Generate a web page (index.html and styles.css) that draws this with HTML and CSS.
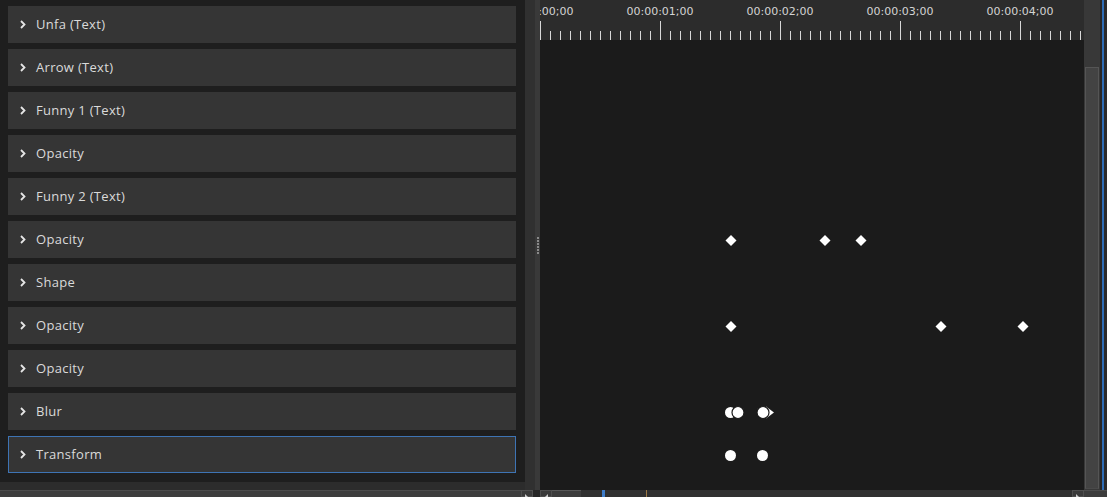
FILE: index.html
```html
<!DOCTYPE html>
<html>
<head>
<meta charset="utf-8">
<link rel="stylesheet" href="styles.css">
</head>
<body>
<div class="app">
  <div class="main">
    <div class="left">
      <div class="list">
        <div class="item"><svg class="chev" viewBox="0 0 6 9"><path d="M1 1l3.5 3.5L1 8"/></svg><span>Unfa (Text)</span></div>
        <div class="item"><svg class="chev" viewBox="0 0 6 9"><path d="M1 1l3.5 3.5L1 8"/></svg><span>Arrow (Text)</span></div>
        <div class="item"><svg class="chev" viewBox="0 0 6 9"><path d="M1 1l3.5 3.5L1 8"/></svg><span>Funny 1 (Text)</span></div>
        <div class="item"><svg class="chev" viewBox="0 0 6 9"><path d="M1 1l3.5 3.5L1 8"/></svg><span>Opacity</span></div>
        <div class="item"><svg class="chev" viewBox="0 0 6 9"><path d="M1 1l3.5 3.5L1 8"/></svg><span>Funny 2 (Text)</span></div>
        <div class="item"><svg class="chev" viewBox="0 0 6 9"><path d="M1 1l3.5 3.5L1 8"/></svg><span>Opacity</span></div>
        <div class="item"><svg class="chev" viewBox="0 0 6 9"><path d="M1 1l3.5 3.5L1 8"/></svg><span>Shape</span></div>
        <div class="item"><svg class="chev" viewBox="0 0 6 9"><path d="M1 1l3.5 3.5L1 8"/></svg><span>Opacity</span></div>
        <div class="item"><svg class="chev" viewBox="0 0 6 9"><path d="M1 1l3.5 3.5L1 8"/></svg><span>Opacity</span></div>
        <div class="item"><svg class="chev" viewBox="0 0 6 9"><path d="M1 1l3.5 3.5L1 8"/></svg><span>Blur</span></div>
        <div class="item selected"><svg class="chev" viewBox="0 0 6 9"><path d="M1 1l3.5 3.5L1 8"/></svg><span>Transform</span></div>
      </div>
      <div class="left-foot"></div>
    </div>
    <div class="splitter">
      <div class="spl-a"></div>
      <div class="spl-b"><div class="grip"></div></div>
    </div>
    <div class="timeline">
      <div class="ruler">
        <div class="labels">
          <span class="lbl">00:00:00;00</span>
          <span class="lbl">00:00:01;00</span>
          <span class="lbl">00:00:02;00</span>
          <span class="lbl">00:00:03;00</span>
          <span class="lbl">00:00:04;00</span>
        </div>
        <div class="ticks"></div>
      </div>
      <div class="tbody">
        <div class="tracks">
          <div class="track"></div>
          <div class="track"></div>
          <div class="track"></div>
          <div class="track"></div>
          <div class="track"></div>
          <div class="track">
            <svg class="keys" viewBox="0 0 544 37">
              <polygon points="191,13 196.5,18.5 191,24 185.5,18.5"/>
              <polygon points="285,13 290.5,18.5 285,24 279.5,18.5"/>
              <polygon points="321,13 326.5,18.5 321,24 315.5,18.5"/>
            </svg>
          </div>
          <div class="track"></div>
          <div class="track">
            <svg class="keys" viewBox="0 0 544 37">
              <polygon points="191,13 196.5,18.5 191,24 185.5,18.5"/>
              <polygon points="401,13 406.5,18.5 401,24 395.5,18.5"/>
              <polygon points="483,13 488.5,18.5 483,24 477.5,18.5"/>
            </svg>
          </div>
          <div class="track"></div>
          <div class="track">
            <svg class="keys" viewBox="0 0 544 37">
              <circle cx="190.5" cy="18.5" r="5.5"/>
              <circle class="gap" cx="198" cy="18.5" r="6"/>
              <polygon points="226,12.5 234,18.5 226,24.5"/>
              <circle class="gap" cx="223" cy="18.5" r="6"/>
            </svg>
          </div>
          <div class="track">
            <svg class="keys" viewBox="0 0 544 37">
              <circle cx="190.5" cy="18.5" r="5.5"/>
              <circle cx="222.5" cy="18.5" r="5.5"/>
            </svg>
          </div>
        </div>
      </div>
    </div>
    <div class="vscroll"><div class="vthumb"></div></div>
    <div class="edge"></div>
  </div>
  <div class="hbar">
    <div class="hb-left"></div>
    <div class="hb-btn"><i class="arr-r"></i></div>
    <div class="hb-gap"></div>
    <div class="hb-time">
      <div class="hb-btn"><i class="arr-l"></i></div>
      <div class="hb-thumb"></div>
      <div class="hb-track">
        <div class="mk-blue"></div>
        <div class="mk-orange"></div>
      </div>
      <div class="hb-btn"><i class="arr-r"></i></div>
    </div>
    <div class="hb-right"></div>
  </div>
</div>
</body>
</html>
```

FILE: styles.css
```css
html, body {
  margin: 0;
  padding: 0;
}
body {
  background: #1e1e1e;
  width: 1107px;
  height: 497px;
  overflow: hidden;
  font-family: "Open Sans", "Noto Sans", sans-serif;
}
.app {
  display: flex;
  flex-direction: column;
  height: 497px;
}
.main {
  display: flex;
  height: 490px;
}
.left {
  width: 525px;
  display: flex;
  flex-direction: column;
  background: #1e1e1e;
}
.list {
  flex: 1;
  padding: 6px 9px 0 8px;
  display: flex;
  flex-direction: column;
  gap: 6px;
  overflow: hidden;
}
.item {
  height: 37px;
  flex: 0 0 37px;
  box-sizing: border-box;
  background: #353535;
  display: flex;
  align-items: center;
  color: #dadada;
  font-size: 13px;
  letter-spacing: 0.3px;
  border: 1px solid transparent;
  padding-bottom: 2px;
}
.item.selected {
  border-color: #3e74b4;
}
.chev {
  width: 6px;
  height: 9px;
  margin-left: 11px;
  margin-right: 10px;
  margin-top: 2px;
  fill: none;
  stroke: #e6e6e6;
  stroke-width: 1.8;
}
.left-foot {
  height: 8px;
  background: #2c2c2c;
}
.splitter {
  width: 15px;
  display: flex;
}
.spl-a {
  width: 10px;
  background: #303030;
}
.spl-b {
  width: 5px;
  background: #393939;
  display: flex;
  align-items: center;
  justify-content: center;
}
.grip {
  width: 2px;
  height: 17px;
  background: repeating-linear-gradient(to bottom, #8a8a8a 0 2px, transparent 2px 3px);
}
.timeline {
  width: 544px;
  display: flex;
  flex-direction: column;
}
.ruler {
  height: 40px;
  background: #2c2c2c;
  overflow: hidden;
  display: flex;
  flex-direction: column;
}
.labels {
  display: flex;
  margin-left: -60px;
  height: 20px;
  padding-top: 5px;
  box-sizing: border-box;
}
.lbl {
  flex: 0 0 120px;
  text-align: center;
  font-family: "DejaVu Sans", sans-serif;
  font-size: 11px;
  line-height: 14px;
  color: #d4d4d4;
}
.ticks {
  height: 19px;
  margin-top: 1px;
  background:
    repeating-linear-gradient(to right, #d8d8d8 0 1px, transparent 1px 120px) 0 0 / 100% 19px no-repeat,
    repeating-linear-gradient(to right, #d8d8d8 0 1px, transparent 1px 10px) 0 10px / 100% 9px no-repeat;
}
.tbody {
  flex: 1;
  background: #1b1b1b;
  overflow: hidden;
}
.tracks {
  margin-top: -33px;
  display: flex;
  flex-direction: column;
  gap: 6px;
}
.track {
  height: 37px;
  flex: 0 0 37px;
}
.keys {
  display: block;
  width: 544px;
  height: 37px;
  fill: #ffffff;
}
.keys .gap {
  stroke: #1b1b1b;
  stroke-width: 1.2;
}
.vscroll {
  width: 16px;
  background: #383838;
  padding-top: 67px;
  display: flex;
  flex-direction: column;
  box-sizing: border-box;
}
.vthumb {
  flex: 1;
  background: #434343;
  border: 1px solid #555555;
  border-bottom-color: #4a4a4a;
  margin: 0 1px 1px 1px;
}
.edge {
  width: 7px;
  box-sizing: border-box;
  background: #2e6cb4;
  border-left: 2px solid #262626;
  border-right: 3px solid #2a2a2a;
}
.hbar {
  height: 7px;
  display: flex;
  background: #3a3a3a;
}
.hb-left {
  width: 521px;
  background: #3d3d3d;
  border-top: 1px solid #4c4c4c;
  box-sizing: border-box;
}
.hb-btn {
  width: 12px;
  flex: 0 0 12px;
  background: #3a3a3a;
  border: 1px solid #4e4e4e;
  box-sizing: border-box;
  display: flex;
  justify-content: center;
  padding-top: 3px;
}
.arr-r {
  width: 0;
  height: 0;
  border-top: 4px solid transparent;
  border-bottom: 4px solid transparent;
  border-left: 4px solid #cfcfcf;
}
.arr-l {
  width: 0;
  height: 0;
  border-top: 4px solid transparent;
  border-bottom: 4px solid transparent;
  border-right: 4px solid #cfcfcf;
}
.hb-gap {
  width: 7px;
  background: #262626;
}
.hb-time {
  width: 544px;
  display: flex;
}
.hb-thumb {
  width: 29px;
  background: #3c3c3c;
  border-top: 1px solid #585858;
  box-sizing: border-box;
}
.hb-track {
  flex: 1;
  background: #303030;
  display: flex;
  padding-left: 21px;
}
.mk-blue {
  width: 3px;
  background: #3d7cc9;
}
.mk-orange {
  width: 1px;
  margin-left: 41px;
  background: #9c7844;
}
.hb-right {
  flex: 1;
  background: #3c3c3c;
  border-top: 1px solid #4c4c4c;
  box-sizing: border-box;
}
```
